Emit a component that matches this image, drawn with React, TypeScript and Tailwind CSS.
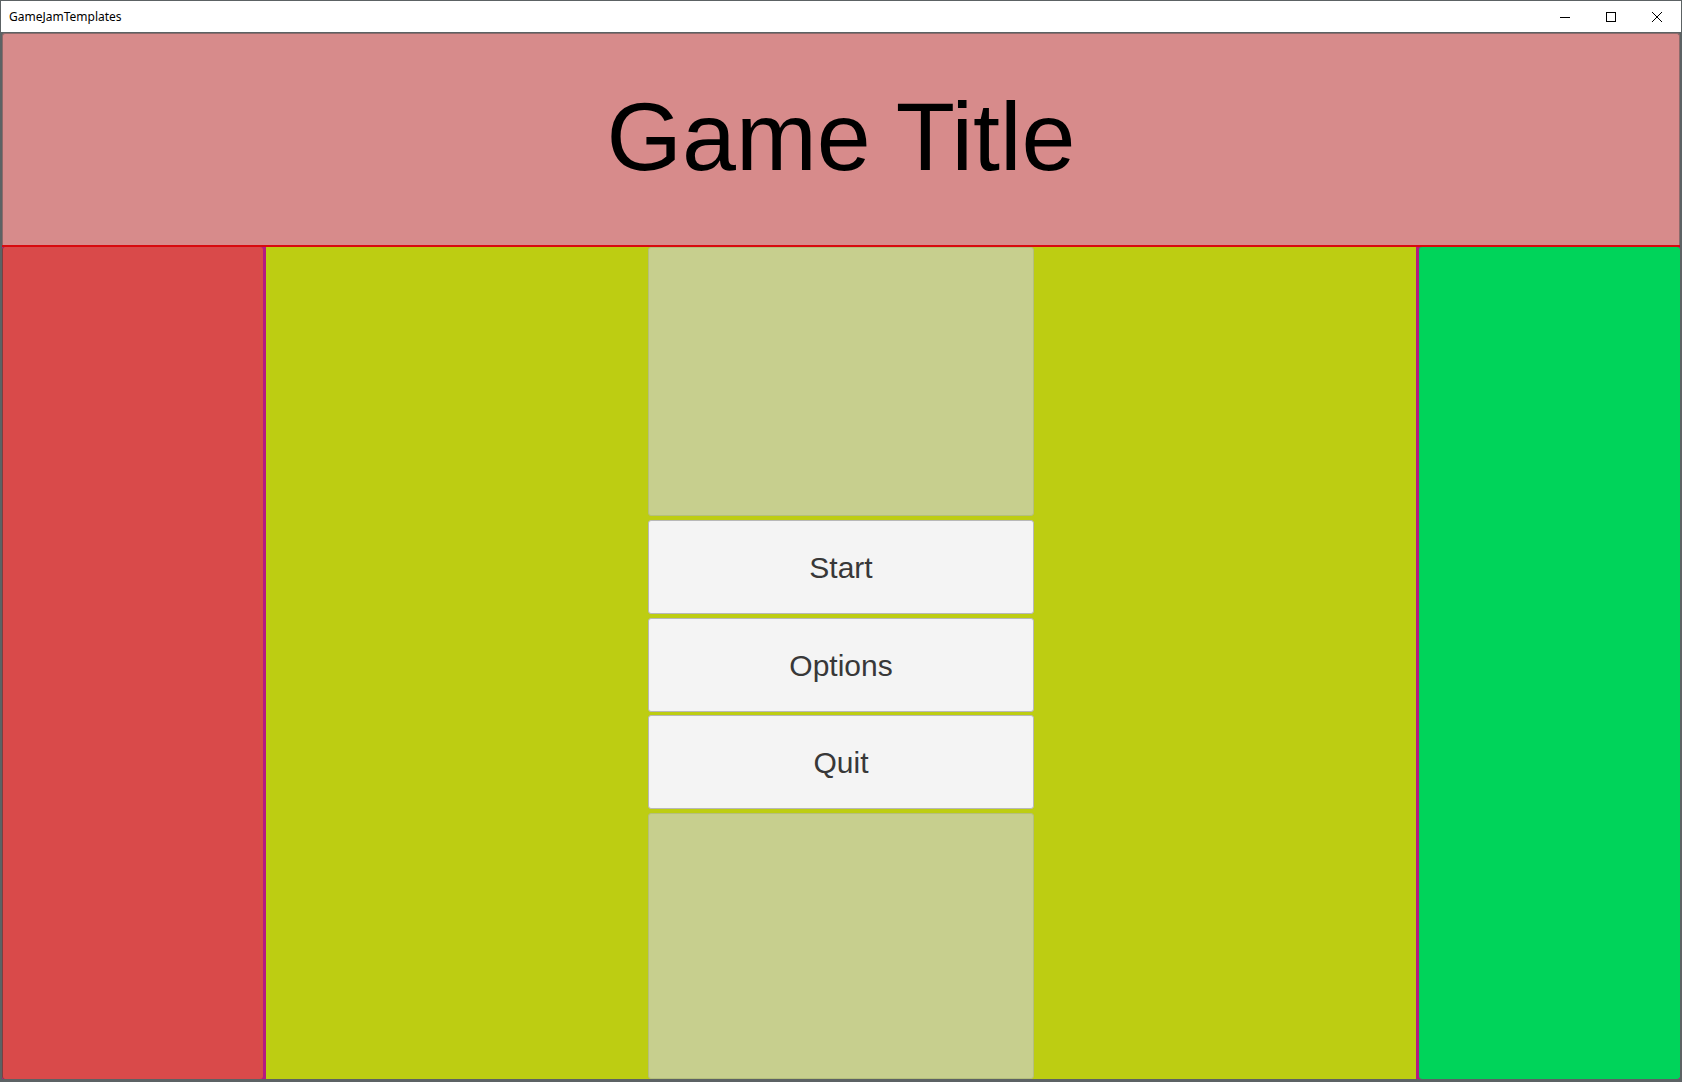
import React from "react";

export default function App() {
  return (
    <div className="w-[1682px] h-[1082px] bg-[#5c6264] flex flex-col overflow-hidden">
      {/* title bar */}
      <div className="h-[31px] mx-[1px] mt-[1px] bg-white flex items-center justify-between shrink-0">
        <div
          className="pl-[8px] text-[12px] text-black pt-[1px]"
          style={{ fontFamily: '"Noto Sans", "Open Sans", sans-serif' }}
        >
          GameJamTemplates
        </div>
        <div className="flex items-center h-full">
          <div className="w-[46px] h-full flex items-center justify-center">
            <svg width="10" height="10" viewBox="0 0 10 10">
              <path d="M0 5.5H10" stroke="#000" strokeWidth="1" />
            </svg>
          </div>
          <div className="w-[46px] h-full flex items-center justify-center">
            <svg width="10" height="10" viewBox="0 0 10 10">
              <rect x="0.5" y="0.5" width="9" height="9" fill="none" stroke="#000" strokeWidth="1" />
            </svg>
          </div>
          <div className="w-[46px] h-full flex items-center justify-center mr-[1px]">
            <svg width="10" height="10" viewBox="0 0 10 10">
              <path d="M0 0L10 10M10 0L0 10" stroke="#000" strokeWidth="1" />
            </svg>
          </div>
        </div>
      </div>

      {/* content */}
      <div className="mt-[1px] flex-1 flex flex-col px-[2px] pb-[3px]">
        {/* header */}
        <div className="h-[212px] shrink-0 bg-[#d78b8b] rounded-t-[3px] border border-[#8d6a6a] border-b-0 flex items-center justify-center">
          <div
            className="text-[97px] leading-none text-black mt-[-6px]"
            style={{ fontFamily: '"Liberation Sans", Arial, sans-serif' }}
          >
            Game Title
          </div>
        </div>
        <div className="h-[2px] shrink-0 bg-[#d80a0e]" />

        {/* columns */}
        <div className="flex-1 flex bg-[#b41a82]">
          <div className="w-[261px] shrink-0 bg-[#d94a4a] rounded-[3px] border-l border-[#7a4040]" />
          <div className="w-[3px] shrink-0" />
          <div className="flex-1 bg-[#bdcd12] flex justify-center">
            <div className="w-[386px] flex flex-col">
              <div className="h-[269px] bg-[#c7cf8e] rounded-[3px] border border-[#b5bf7c]" />
              <div className="h-[4px]" />
              <MenuButton label="Start" />
              <div className="h-[4px]" />
              <MenuButton label="Options" />
              <div className="h-[3px]" />
              <MenuButton label="Quit" />
              <div className="h-[4px]" />
              <div className="flex-1 bg-[#c7cf8e] rounded-[3px] border border-[#b5bf7c]" />
            </div>
          </div>
          <div className="w-[3px] shrink-0" />
          <div className="w-[261px] shrink-0 bg-[#00d45a] rounded-[3px]" />
        </div>
      </div>
    </div>
  );
}

function MenuButton({ label }: { label: string }) {
  return (
    <div
      className="h-[94px] bg-[#f4f4f4] rounded-[3px] border border-[#b8b8b8] flex items-center justify-center text-[30px] text-[#383838]"
      style={{ fontFamily: '"Liberation Sans", Arial, sans-serif' }}
    >
      {label}
    </div>
  );
}
